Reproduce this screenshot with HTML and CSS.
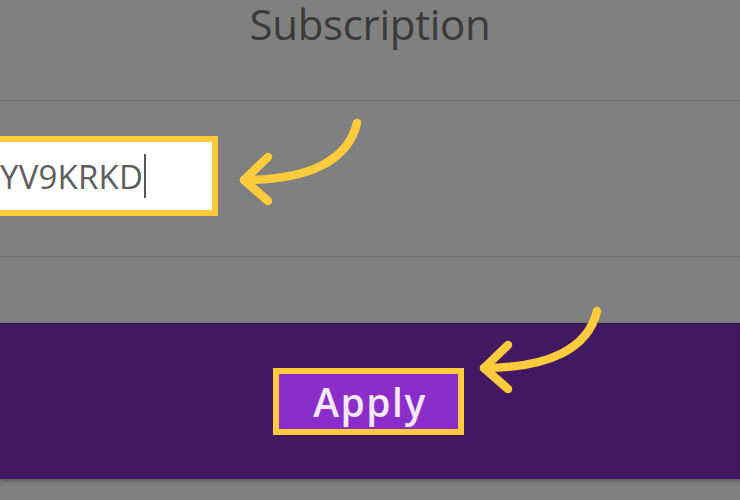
FILE: index.html
```html
<!DOCTYPE html>
<html>
<head>
<meta charset="utf-8">
<link rel="stylesheet" href="styles.css">
</head>
<body>
<div class="page">
  <header class="header"><h1 class="title">Subscription</h1></header>
  <section class="code-row">
    <div class="code-box"><span class="code-text">YV9KRKD</span><span class="caret"></span></div>
  </section>
  <div class="spacer"></div>
  <section class="band">
    <button class="apply">Apply</button>
  </section>
  <div class="foot"></div>

  <svg class="arrow arrow-one" width="125" height="92" viewBox="0 0 125 92">
    <path d="M119 7 C110 45 70 64 6 64" fill="none" stroke="#fdcb3b" stroke-width="8.5" stroke-linecap="round"/>
    <path d="M30 41 L6 64 L30 85" fill="none" stroke="#fdcb3b" stroke-width="8.5" stroke-linecap="round" stroke-linejoin="round"/>
  </svg>
  <svg class="arrow arrow-two" width="125" height="92" viewBox="0 0 125 92">
    <path d="M119 7 C110 45 70 64 6 64" fill="none" stroke="#fdcb3b" stroke-width="8.5" stroke-linecap="round"/>
    <path d="M30 41 L6 64 L30 85" fill="none" stroke="#fdcb3b" stroke-width="8.5" stroke-linecap="round" stroke-linejoin="round"/>
  </svg>
</div>
</body>
</html>
```
FILE: styles.css
```css
html, body {
  margin: 0;
  padding: 0;
  background: #808080;
  overflow: hidden;
}
.page {
  position: relative;
  width: 740px;
  height: 500px;
  overflow: hidden;
  font-family: "Open Sans", "Liberation Sans", sans-serif;
}
.header {
  box-sizing: border-box;
  height: 101px;
  border-bottom: 1px solid #6c6c6c;
  display: flex;
  justify-content: center;
  align-items: flex-start;
  padding-top: 1px;
}
.title {
  margin: 0;
  font-size: 42px;
  line-height: 46px;
  font-weight: 400;
  color: #3a3a3a;
  letter-spacing: -0.3px;
}
.code-row {
  height: 156px;
  box-sizing: border-box;
  border-bottom: 1px solid #6c6c6c;
  padding-top: 35px;
}
.code-box {
  margin-left: -50px;
  width: 268px;
  height: 80px;
  box-sizing: border-box;
  background: #fff;
  border: 6px solid #fdcb3b;
  display: flex;
  align-items: center;
  padding-left: 44px;
}
.code-text {
  font-size: 33px;
  color: #5e5e5e;
  line-height: 1;
  letter-spacing: 0.2px;
}
.caret {
  width: 1.5px;
  height: 44px;
  background: #555;
  margin-left: 1px;
}
.spacer {
  height: 66px;
}
.band {
  height: 156px;
  background: #431862;
  box-shadow: 0 2px 4px rgba(0,0,0,0.35), inset 0 1px 1px rgba(0,0,0,0.25);
  display: flex;
  justify-content: center;
  align-items: flex-start;
  padding-top: 45px;
  box-sizing: border-box;
}
.apply {
  margin-right: 4px;
  width: 191px;
  height: 67px;
  box-sizing: border-box;
  border: 6px solid #fdcb3b;
  background: #8a2dca;
  color: #f5e8f8;
  font-family: "Open Sans", "Liberation Sans", sans-serif;
  font-weight: 600;
  font-size: 39px;
  letter-spacing: 1.5px;
  line-height: 1;
  padding: 0 0 0 4px;
  display: flex;
  align-items: center;
  justify-content: center;
}
.foot {
  height: 21px;
}
.arrow {
  position: absolute;
}
.arrow-one {
  left: 238px;
  top: 116px;
}
.arrow-two {
  left: 478px;
  top: 304px;
}
```
